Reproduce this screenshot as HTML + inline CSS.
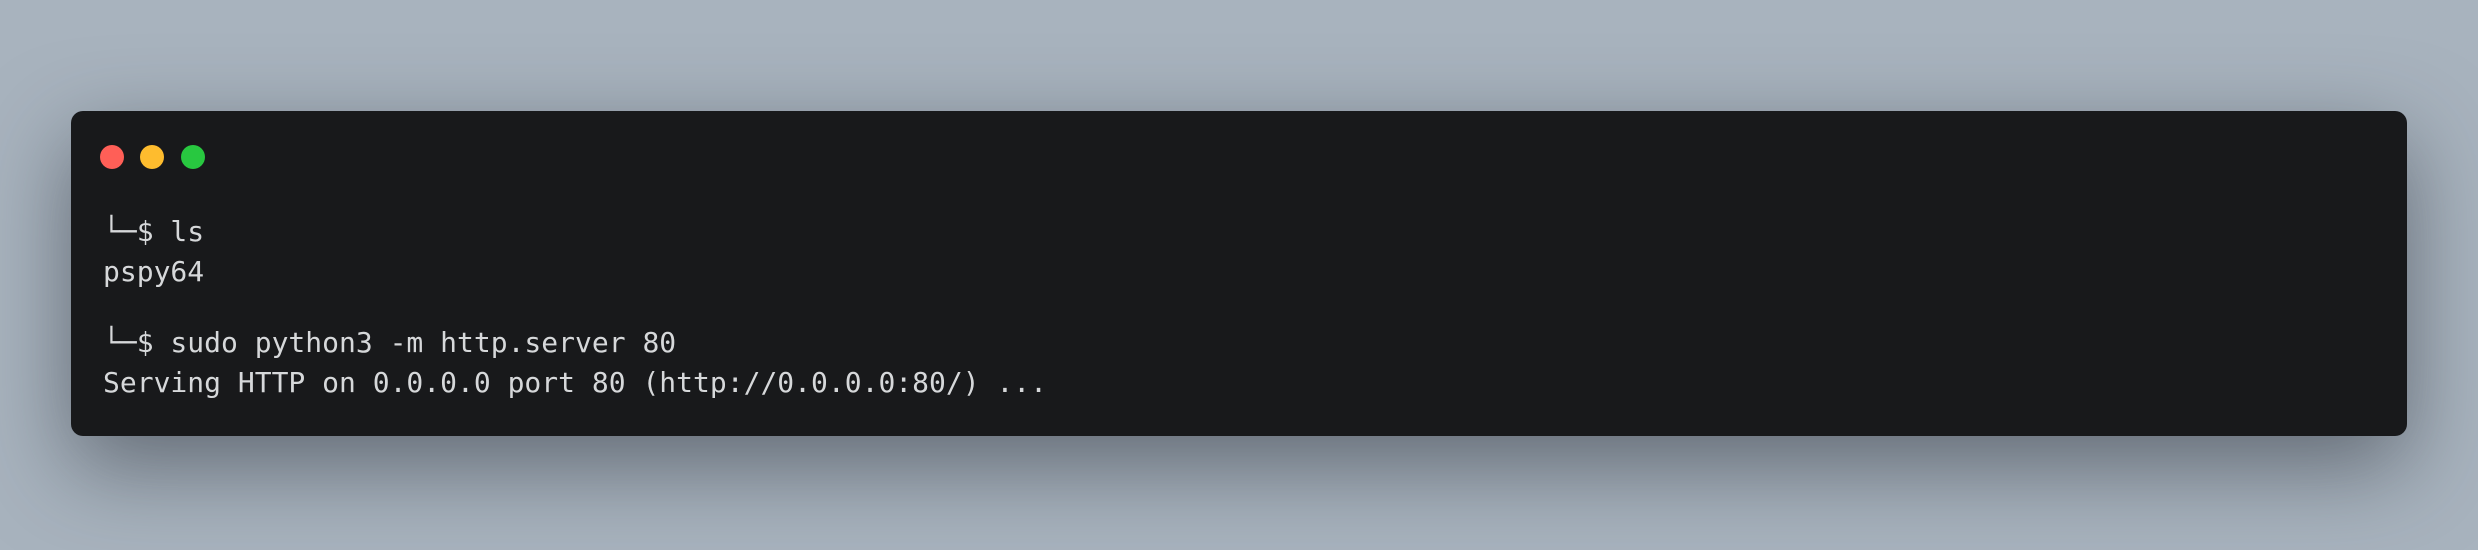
<!DOCTYPE html>
<html><head><style>
html,body{margin:0;padding:0;}
body{width:2478px;height:550px;background:#a8b3be;position:relative;overflow:hidden;}
.win{position:absolute;left:71px;top:111px;width:2336px;height:325px;background:#18191b;border-radius:12px;box-shadow:0 30px 90px rgba(40,45,55,0.55);}
.dot{position:absolute;top:34px;width:24px;height:24px;border-radius:50%;}
pre{position:absolute;left:32px;margin:0;font-family:"DejaVu Sans Mono","Liberation Mono",monospace;font-size:28px;line-height:40px;color:#d6d8da;}
</style></head><body>
<div class="win">
<div class="dot" style="left:29px;background:#ff5f57"></div>
<div class="dot" style="left:69px;background:#febc2e"></div>
<div class="dot" style="left:110px;background:#28c840"></div>
<pre style="top:101px">└─$ ls
pspy64</pre>
<pre style="top:212px">└─$ sudo python3 -m http.server 80
Serving HTTP on 0.0.0.0 port 80 (http://0.0.0.0:80/) ...</pre>
</div>
</body></html>
